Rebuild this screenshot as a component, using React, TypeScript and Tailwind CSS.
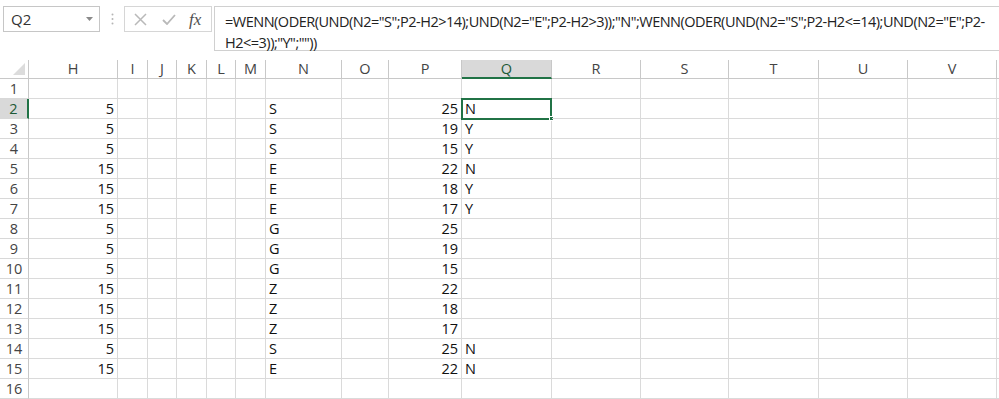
import React from 'react';

const FONT = { fontFamily: '"Open Sans", "Liberation Sans", sans-serif' };

const columns = [
  { key: 'H', w: 'w-[89px]' },
  { key: 'I', w: 'w-[30px]' },
  { key: 'J', w: 'w-[29px]' },
  { key: 'K', w: 'w-[30px]' },
  { key: 'L', w: 'w-[29px]' },
  { key: 'M', w: 'w-[30px]' },
  { key: 'N', w: 'w-[76px]' },
  { key: 'O', w: 'w-[47px]' },
  { key: 'P', w: 'w-[73px]' },
  { key: 'Q', w: 'w-[90px]' },
  { key: 'R', w: 'w-[89px]' },
  { key: 'S', w: 'w-[88px]' },
  { key: 'T', w: 'w-[90px]' },
  { key: 'U', w: 'w-[89px]' },
  { key: 'V', w: 'w-[89px]' },
];

// H, N, P, Q values per row (row 1..16)
const rows: (string[] | null)[] = [
  null,
  ['5', 'S', '25', 'N'],
  ['5', 'S', '19', 'Y'],
  ['5', 'S', '15', 'Y'],
  ['15', 'E', '22', 'N'],
  ['15', 'E', '18', 'Y'],
  ['15', 'E', '17', 'Y'],
  ['5', 'G', '25', ''],
  ['5', 'G', '19', ''],
  ['5', 'G', '15', ''],
  ['15', 'Z', '22', ''],
  ['15', 'Z', '18', ''],
  ['15', 'Z', '17', ''],
  ['5', 'S', '25', 'N'],
  ['15', 'E', '22', 'N'],
  null,
];

const cellValue = (row: string[] | null, col: string) => {
  if (!row) return '';
  if (col === 'H') return row[0];
  if (col === 'N') return row[1];
  if (col === 'P') return row[2];
  if (col === 'Q') return row[3];
  return '';
};

const FormulaBar = () => (
  <div className="relative h-[60px] w-full bg-white">
    {/* name box */}
    <div className="absolute left-[3px] top-[6px] flex h-[26px] w-[97px] items-center justify-between border border-[#c6c6c6] pl-[7px] pr-[6px] text-[15px] text-[#333]">
      <span>Q2</span>
      <svg width="7" height="4" viewBox="0 0 7 4">
        <path d="M0 0 L7 0 L3.5 4 Z" fill="#8a8a8a" />
      </svg>
    </div>
    <svg className="absolute left-[111px] top-[13px]" width="3" height="12" viewBox="0 0 3 12">
      <circle cx="1.5" cy="1.5" r="1" fill="#b5b5b5" />
      <circle cx="1.5" cy="6" r="1" fill="#b5b5b5" />
      <circle cx="1.5" cy="10.5" r="1" fill="#b5b5b5" />
    </svg>
    {/* cancel / enter / fx */}
    <div className="absolute left-[124px] top-[6px] flex h-[26px] w-[88px] items-center border border-[#d6d6d6]">
      <svg className="ml-[9px]" width="13" height="13" viewBox="0 0 13 13">
        <path d="M1 1 L12 12 M12 1 L1 12" stroke="#b9b9b9" strokeWidth="1.5" />
      </svg>
      <svg className="ml-[15px]" width="14" height="11" viewBox="0 0 14 11">
        <path d="M1 6 L5 10 L13 1" stroke="#b9b9b9" strokeWidth="1.8" fill="none" />
      </svg>
      <span
        className="ml-[13px] text-[17px] italic leading-none text-[#505050]"
        style={{ fontFamily: '"Liberation Serif", serif' }}
      >
        fx
      </span>
    </div>
    {/* formula box */}
    <div className="absolute left-[214px] right-0 top-[6px] h-[45px] border border-r-0 border-[#d0d0d0] pl-[10px] pt-[4px] text-[14.5px] leading-[21px] text-[#222] whitespace-nowrap tracking-[-0.5px]">
      <div>=WENN(ODER(UND(N2="S";P2-H2&gt;14);UND(N2="E";P2-H2&gt;3));"N";WENN(ODER(UND(N2="S";P2-H2&lt;=14);UND(N2="E";P2-</div>
      <div>H2&lt;=3));"Y";""))</div>
    </div>
  </div>
);

const HeaderRow = () => (
  <div className="flex h-[19px]">
    <div className="relative h-[19px] w-[29px] shrink-0 border-b border-r border-[#c8c8c8] bg-white">
      <svg className="absolute bottom-[3px] right-[3px]" width="12" height="12" viewBox="0 0 12 12">
        <path d="M12 0 L12 12 L0 12 Z" fill="#dcdcdc" />
      </svg>
    </div>
    {columns.map((c) => (
      <div
        key={c.key}
        className={`${c.w} flex shrink-0 items-center justify-center border-r text-[14.5px] ${
          c.key === 'Q'
            ? 'border-b-2 border-b-[#217346] border-r-[#c8c8c8] bg-[#d9d9d9] text-[#1e5a37]'
            : 'border-b border-[#c8c8c8] bg-white text-[#444]'
        }`}
      >
        {c.key}
      </div>
    ))}
    <div className="flex-1 border-b border-[#c8c8c8]" />
  </div>
);

const DataRow = ({ idx, row }: { idx: number; row: string[] | null }) => {
  const selected = idx === 2;
  return (
    <div className={`flex h-[20px] ${selected ? 'relative z-10' : ''}`}>
      <div
        className={`flex h-[20px] w-[29px] shrink-0 items-center justify-center border-b border-[#d8d8d8] text-[14.5px] ${
          selected ? 'border-r-2 border-r-[#217346] bg-[#d9d9d9] text-[#1e5a37]' : 'border-r border-r-[#c8c8c8] text-[#444]'
        }`}
      >
        {idx}
      </div>
      {columns.map((c) => {
        const v = cellValue(row, c.key);
        const right = c.key === 'H' || c.key === 'P';
        const isSel = selected && c.key === 'Q';
        return (
          <div
            key={c.key}
            className={`${c.w} relative flex shrink-0 items-center border-b border-r border-[#dadada] text-[14.5px] text-[#111] ${
              right ? 'justify-end pr-[3px]' : 'justify-start pl-[3px]'
            }`}
          >
            {v}
            {isSel && (
              <>
                <div className="pointer-events-none absolute left-[-1px] top-[-1px] h-[22px] w-[91px] border-2 border-[#217346]" />
                <div className="absolute bottom-[-3px] right-[-3px] h-[5px] w-[5px] border border-white bg-[#217346]" />
              </>
            )}
          </div>
        );
      })}
      <div className="flex-1 border-b border-[#dadada]" />
    </div>
  );
};

export default function App() {
  return (
    <main className="h-[399px] w-[999px] overflow-hidden bg-white" style={FONT}>
      <FormulaBar />
      <HeaderRow />
      {rows.map((r, i) => (
        <DataRow key={i} idx={i + 1} row={r} />
      ))}
    </main>
  );
}
